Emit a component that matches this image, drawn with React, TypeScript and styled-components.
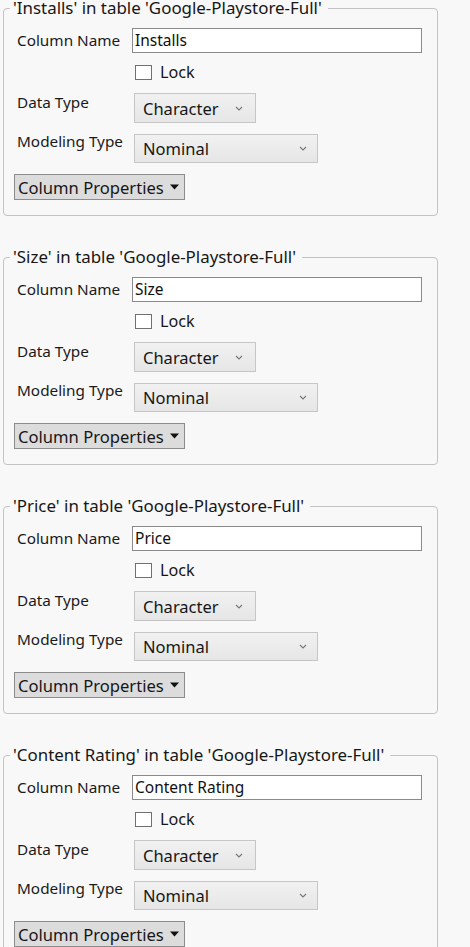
import React from "react";
import styled, { createGlobalStyle } from "styled-components";

const Global = createGlobalStyle`
  html, body {
    margin: 0;
    padding: 0;
    background: #f8f8f8;
  }
  body {
    font-family: "Noto Sans", "Open Sans", Arial, sans-serif;
    color: #1c1c1c;
    -webkit-font-smoothing: antialiased;
  }
`;

const Page = styled.div`
  display: flex;
  flex-direction: column;
  gap: 31px;
  margin-top: -2px;
  padding-left: 3px;
`;

const Group = styled.fieldset`
  box-sizing: border-box;
  width: 435px;
  margin: 0;
  padding: 10px 15px 15px 10px;
  border: 1px solid #c3c3c3;
  border-radius: 4px;
  display: flex;
  flex-direction: column;
`;

const Legend = styled.legend`
  margin-left: -4px;
  padding: 0 6px 0 3px;
  font-size: 16.9px;
  line-height: 20px;
  color: #161616;
  white-space: nowrap;
`;

const Row = styled.div<{ $mt?: number; $center?: boolean }>`
  display: flex;
  align-items: ${(p) => (p.$center ? "center" : "flex-start")};
  margin-top: ${(p) => p.$mt ?? 0}px;
`;

const Label = styled.div<{ $dy?: number }>`
  box-sizing: border-box;
  width: 118px;
  flex: none;
  padding-left: 3px;
  margin-top: ${(p) => p.$dy ?? 0}px;
  font-size: 15.3px;
  line-height: 20px;
  color: #1a1a1a;
  white-space: nowrap;
`;

const TextInput = styled.input`
  box-sizing: border-box;
  flex: 1;
  min-width: 0;
  height: 25px;
  margin: 0;
  padding: 0 2px 2px 2px;
  border: 1px solid #8a8a8a;
  background: #ffffff;
  font-family: "Noto Sans", "Open Sans", Arial, sans-serif;
  font-size: 15.5px;
  color: #111111;
  outline: none;
`;

const CheckWrap = styled.label`
  display: flex;
  align-items: center;
  gap: 8px;
  margin-left: 121px;
  height: 15px;
  font-size: 16.2px;
  line-height: 15px;
  color: #161616;
`;

const CheckBox = styled.input`
  appearance: none;
  -webkit-appearance: none;
  box-sizing: border-box;
  width: 17px;
  height: 15px;
  margin: 0;
  border: 1px solid #707070;
  background: #ffffff;
`;

const Select = styled.button<{ $w: number; $h: number; $pr: number }>`
  box-sizing: border-box;
  width: ${(p) => p.$w}px;
  height: ${(p) => p.$h}px;
  margin: 0 0 0 2px;
  padding: 0 ${(p) => p.$pr}px 0 8px;
  display: flex;
  align-items: center;
  justify-content: space-between;
  border: 1px solid #c6c6c6;
  border-radius: 0;
  background: linear-gradient(#f1f1f1, #e6e6e6);
  font-family: "Noto Sans", "Open Sans", Arial, sans-serif;
  font-size: 16.5px;
  color: #161616;
`;

const PropsButton = styled.button`
  box-sizing: border-box;
  width: 171px;
  height: 26px;
  margin: 0;
  padding: 0 5px 0 3px;
  display: flex;
  align-items: center;
  justify-content: space-between;
  border: 1px solid #8c8c8c;
  border-radius: 0;
  background: #dcdcdc;
  font-family: "Noto Sans", "Open Sans", Arial, sans-serif;
  font-size: 16.6px;
  color: #161616;
`;

const Chevron = () => (
  <svg width="8" height="5" viewBox="0 0 8 5">
    <polyline points="1,1 4,4 7,1" fill="none" stroke="#777" strokeWidth="1.1" />
  </svg>
);

const Caret = () => (
  <svg width="9" height="6" viewBox="0 0 9 6">
    <polygon points="0,0.5 9,0.5 4.5,5.5" fill="#111" />
  </svg>
);

const ColumnGroup = ({ name }: { name: string }) => (
  <Group>
    <Legend>'{name}' in table 'Google-Playstore-Full'</Legend>
    <Row $center>
      <Label $dy={-2}>Column Name</Label>
      <TextInput defaultValue={name} />
    </Row>
    <Row $mt={12}>
      <CheckWrap>
        <CheckBox type="checkbox" />
        Lock
      </CheckWrap>
    </Row>
    <Row $mt={13}>
      <Label $dy={-1}>Data Type</Label>
      <Select $w={122} $h={30} $pr={12}>
        Character
        <Chevron />
      </Select>
    </Row>
    <Row $mt={11}>
      <Label $dy={-3}>Modeling Type</Label>
      <Select $w={184} $h={29} $pr={10}>
        Nominal
        <Chevron />
      </Select>
    </Row>
    <Row $mt={11}>
      <PropsButton>
        Column Properties
        <Caret />
      </PropsButton>
    </Row>
  </Group>
);

export default function App() {
  return (
    <>
      <Global />
      <Page>
        {["Installs", "Size", "Price", "Content Rating"].map((n) => (
          <ColumnGroup key={n} name={n} />
        ))}
      </Page>
    </>
  );
}
